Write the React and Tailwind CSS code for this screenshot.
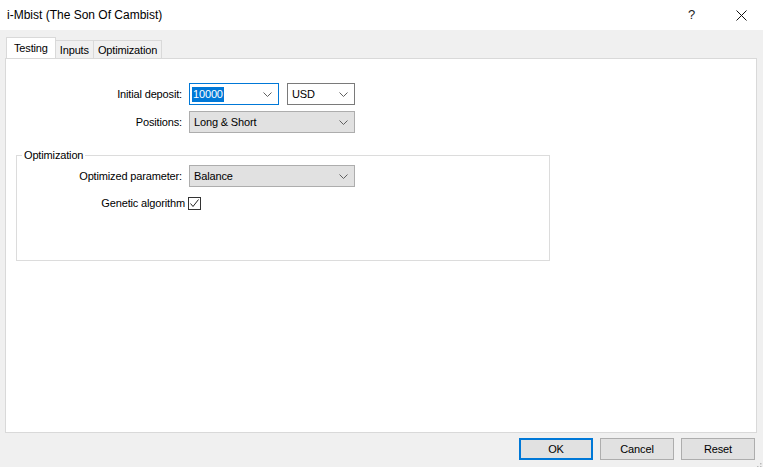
import React from 'react'

const font = { fontFamily: '"Liberation Sans", Arial, sans-serif' }

function Chevron() {
  return (
    <svg width="9" height="5" viewBox="0 0 9 5" className="shrink-0">
      <path d="M0.5 0.5 L4.5 4.5 L8.5 0.5" fill="none" stroke="#606060" strokeWidth="1" />
    </svg>
  )
}

function Combo({ value, width, variant = 'flat', selected = false }) {
  const styles = {
    flat: 'bg-[#e1e1e1] border-[#adadad]',
    edit: 'bg-white border-[#7a7a7a]',
    focus: 'bg-white border-[#0078d7]',
  }
  return (
    <div className={`flex items-center justify-between h-[22px] border pl-[2px] pr-[6px] ${styles[variant]}`} style={{ width }}>
      {selected ? (
        <span className="bg-[#0078d7] text-white px-[1px] leading-[15px]">{value}</span>
      ) : (
        <span className="pl-[2px] text-black">{value}</span>
      )}
      <Chevron />
    </div>
  )
}

function Tab({ label, active }) {
  if (active) {
    return (
      <div className="relative z-10 -mb-px h-[21px] px-[7px] bg-white border border-b-0 border-[#d9d9d9] flex items-center">
        {label}
      </div>
    )
  }
  return (
    <div className="h-[18px] mt-[3px] px-[4px] bg-[#f0f0f0] border border-l-0 border-b-0 border-[#d9d9d9] flex items-center pt-[2px]">
      {label}
    </div>
  )
}

function Button({ label, primary }) {
  return (
    <button
      className={`w-[74px] h-[22px] bg-[#e1e1e1] flex items-center justify-center ${
        primary ? 'border-2 border-[#0078d7]' : 'border border-[#adadad]'
      }`}
    >
      {label}
    </button>
  )
}

export default function App() {
  return (
    <div className="w-[763px] h-[467px] bg-[#f0f0f0] flex flex-col text-[11px] tracking-[-0.15px] text-black overflow-hidden" style={font}>
      {/* title bar */}
      <div className="h-[30px] bg-white flex items-center pl-[7px] shrink-0 tracking-normal">
        <span className="text-[12px] flex-1">i-Mbist (The Son Of Cambist)</span>
        <span className="text-[13px] w-[12px] mr-[36px] text-[#222]">?</span>
        <svg width="11" height="11" viewBox="0 0 11 11" className="mr-[16px]">
          <path d="M0.5 0.5 L10.5 10.5 M10.5 0.5 L0.5 10.5" stroke="#111" strokeWidth="1" />
        </svg>
      </div>

      {/* tabs */}
      <div className="flex pl-[6px] pt-[7px] shrink-0">
        <Tab label="Testing" active />
        <Tab label="Inputs" />
        <Tab label="Optimization" />
      </div>

      {/* panel */}
      <div className="ml-[5px] mr-[6px] h-[375px] bg-white border border-[#d9d9d9] shrink-0">
        <div className="grid grid-cols-[176px_auto] gap-x-[7px] gap-y-[6px] items-center mt-[24px]">
          <div className="text-right">Initial deposit:</div>
          <div className="flex gap-[8px]">
            <Combo value="10000" width={90} variant="focus" selected />
            <Combo value="USD" width={68} variant="edit" />
          </div>
          <div className="text-right">Positions:</div>
          <Combo value="Long & Short" width={166} />
        </div>

        <div className="ml-[10px] mt-[22px] w-[534px] h-[106px] border border-[#dcdcdc]">
          <div className="-mt-[7px] ml-[5px] flex">
            <span className="bg-white px-[2px] leading-[13px]">Optimization</span>
          </div>
          <div className="grid grid-cols-[165px_auto] gap-x-[7px] items-center mt-[3px]">
            <div className="text-right">Optimized parameter:</div>
            <Combo value="Balance" width={166} />
          </div>
          <div className="flex items-center mt-[8px]">
            <div className="w-[168px] text-right">Genetic algorithm</div>
            <div className="ml-[3px] w-[13px] h-[13px] border border-[#333] bg-white flex items-center justify-center">
              <svg width="11" height="11" viewBox="0 0 11 11">
                <path d="M1.5 5.5 L4 8.5 L9.5 1.5" fill="none" stroke="#222" strokeWidth="1" />
              </svg>
            </div>
          </div>
        </div>
      </div>

      {/* buttons */}
      <div className="flex justify-end gap-[7px] mt-[5px] mr-[8px]">
        <Button label="OK" primary />
        <Button label="Cancel" />
        <Button label="Reset" />
      </div>
      <div className="flex justify-end pr-[1px] pt-[3px]">
        <svg width="8" height="8" viewBox="0 0 8 8">
          <rect x="6" y="0" width="1.5" height="1.5" fill="#bbb" />
          <rect x="3" y="3" width="1.5" height="1.5" fill="#bbb" />
          <rect x="6" y="3" width="1.5" height="1.5" fill="#bbb" />
          <rect x="0" y="6" width="1.5" height="1.5" fill="#bbb" />
          <rect x="3" y="6" width="1.5" height="1.5" fill="#bbb" />
          <rect x="6" y="6" width="1.5" height="1.5" fill="#bbb" />
        </svg>
      </div>
    </div>
  )
}
